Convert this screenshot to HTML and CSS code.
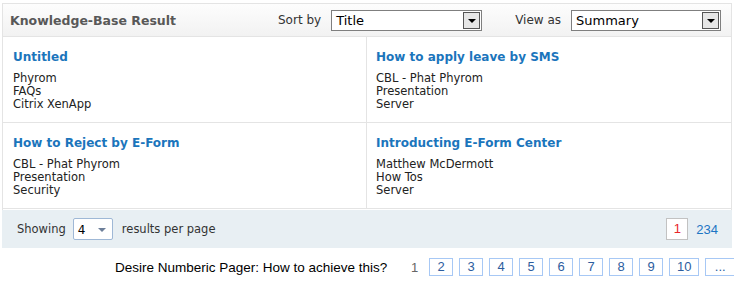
FILE: index.html
```html
<!DOCTYPE html>
<html>
<head lang="en">
    <meta charset="UTF-8">
    <title>Knowledge-Base Result</title>
    <link rel="stylesheet" href="styles.css">
</head>
<body>
<div id="kb">
    <div class="kb-head">
        <h2 class="kb-title">Knowledge-Base Result</h2>
        <span class="lbl lbl-sort">Sort by</span>
        <div class="dd dd-sort"><span class="dd-text">Title</span><span class="dd-btn"></span></div>
        <span class="lbl lbl-view">View as</span>
        <div class="dd dd-view"><span class="dd-text">Summary</span><span class="dd-btn"></span></div>
    </div>
    <div class="kb-grid">
        <div class="cell">
            <a class="cell-title" href="#">Untitled</a>
            <ul>
                <li>Phyrom</li>
                <li>FAQs</li>
                <li>Citrix XenApp</li>
            </ul>
        </div>
        <div class="cell">
            <a class="cell-title" href="#">How to apply leave by SMS</a>
            <ul>
                <li>CBL - Phat Phyrom</li>
                <li>Presentation</li>
                <li>Server</li>
            </ul>
        </div>
        <div class="cell">
            <a class="cell-title" href="#">How to Reject by E-Form</a>
            <ul>
                <li>CBL - Phat Phyrom</li>
                <li>Presentation</li>
                <li>Security</li>
            </ul>
        </div>
        <div class="cell">
            <a class="cell-title" href="#">Introducting E-Form Center</a>
            <ul>
                <li>Matthew McDermott</li>
                <li>How Tos</li>
                <li>Server</li>
            </ul>
        </div>
    </div>
    <div class="kb-foot">
        <span>Showing</span>
        <div class="size"><span>4</span><span class="size-arrow"></span></div>
        <span>results per page</span>
        <div class="pages">
            <span class="cur">1</span>
            <a href="#">234</a>
        </div>
    </div>
</div>
<div class="demo">
    <span class="demo-q">Desire Numberic Pager: How to achieve this?</span>
    <span class="num">1</span>
    <a class="box" href="#">2</a>
    <a class="box" href="#">3</a>
    <a class="box" href="#">4</a>
    <a class="box" href="#">5</a>
    <a class="box" href="#">6</a>
    <a class="box" href="#">7</a>
    <a class="box" href="#">8</a>
    <a class="box" href="#">9</a>
    <a class="box wide" href="#">10</a>
    <a class="box wide" href="#">...</a>
</div>
</body>
</html>
```

FILE: styles.css
```css
*{
    margin: 0;
    padding: 0;
}
body{
    padding: 3px 0 0 2px;
    font-family: "DejaVu Sans", Verdana, sans-serif;
    font-size: 11.5px;
    color: #333;
    background: #fff;
}
ul{
    list-style: none;
}
a{
    text-decoration: none;
}
#kb{
    width: 728px;
    border: 1px solid #e4e4e4;
    border-bottom: 0;
}
.kb-head{
    height: 32px;
    display: flex;
    align-items: center;
    background: linear-gradient(#fdfdfd, #f2f2f2);
    border-bottom: 1px solid #e4e4e4;
}
.kb-title{
    font-size: 12.5px;
    font-weight: bold;
    color: #585858;
    margin-left: 7px;
    width: 268px;
}
.lbl{
    font-size: 12px;
    color: #333;
}
.lbl-view{
    margin-left: 33px;
}
.dd{
    height: 21px;
    box-sizing: border-box;
    border: 1px solid #7f7f7f;
    background: #fff;
    display: flex;
    align-items: center;
    margin-left: 10px;
}
.dd-sort{
    width: 151px;
}
.dd-view{
    width: 150px;
}
.dd-text{
    flex: 1;
    padding-left: 4px;
    font-size: 13px;
    color: #000;
}
.dd-btn{
    width: 15px;
    height: 15px;
    margin-right: 1px;
    border: 1px solid #555;
    background: #e6e6e6;
    position: relative;
}
.dd-btn:after{
    content: "";
    position: absolute;
    left: 4px;
    top: 6px;
    border-left: 4px solid transparent;
    border-right: 4px solid transparent;
    border-top: 4px solid #000;
}
.kb-grid{
    display: grid;
    grid-template-columns: 364px 364px;
}
.cell{
    padding: 11px 10px 11px;
    border-bottom: 1px solid #e4e4e4;
}
.cell:nth-child(odd){
    border-right: 1px solid #e4e4e4;
}
.cell:nth-child(even){
    padding-left: 9px;
}
.cell-title{
    display: block;
    height: 18px;
    line-height: 18px;
    margin-bottom: 6px;
    font-size: 12px;
    font-weight: bold;
    color: #1b75bc;
}
.cell li{
    line-height: 13px;
    color: #222;
}
.kb-foot{
    height: 38px;
    display: flex;
    align-items: center;
    background: #e8eff3;
    padding-left: 15px;
    margin: 1px -1px 0;
}
.size{
    width: 40px;
    height: 22px;
    box-sizing: border-box;
    border: 1px solid #9fb8d6;
    border-radius: 2px;
    background: #fff;
    margin: 0 9px 0 7px;
    display: flex;
    align-items: center;
    justify-content: space-between;
    padding: 2px 6px 0 4px;
    font-size: 12px;
    color: #000;
}
.size-arrow{
    border-left: 4px solid transparent;
    border-right: 4px solid transparent;
    border-top: 4px solid #6d7f99;
}
.pages{
    margin-left: auto;
    margin-right: 14px;
    display: flex;
    align-items: center;
}
.cur{
    width: 20px;
    height: 20px;
    border: 1px solid #c2c2c2;
    background: #fff;
    color: #e8252a;
    text-align: center;
    line-height: 20px;
    font-family: "Liberation Sans", Arial, sans-serif;
    font-size: 13px;
    margin-right: 8px;
}
.pages a{
    font-family: "Liberation Sans", Arial, sans-serif;
    font-size: 13px;
    color: #1d75c4;
}
.demo{
    display: flex;
    align-items: center;
    margin-top: 10px;
    padding-left: 113px;
    font-family: "Liberation Sans", Arial, sans-serif;
    font-size: 13px;
    white-space: nowrap;
}
.demo-q{
    font-size: 13.5px;
    color: #000;
    width: 277px;
    flex-shrink: 0;
    margin-right: 19px;
}
.num{
    color: #666;
    margin-right: 11px;
}
.box{
    width: 22px;
    height: 16px;
    border: 1px solid #a7c8f5;
    color: #2d5d9e;
    text-align: center;
    line-height: 16px;
    margin-right: 6px;
    flex-shrink: 0;
}
.box.wide{
    width: 28px;
}
```
